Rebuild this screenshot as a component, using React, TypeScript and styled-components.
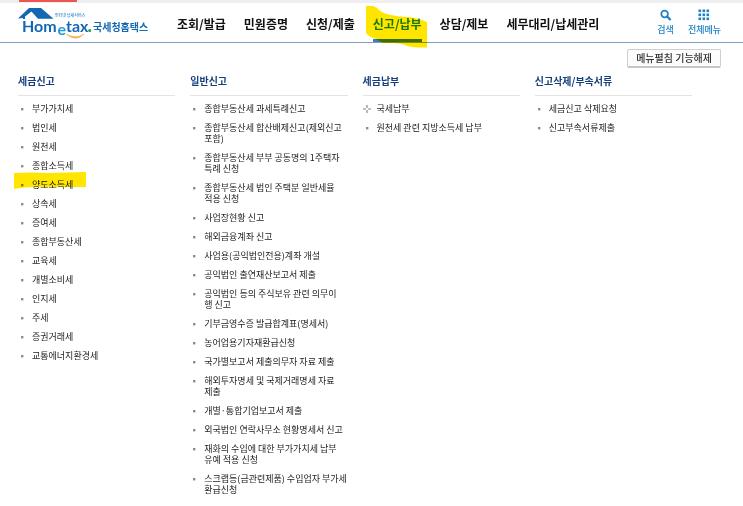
import React from "react";
import styled, { createGlobalStyle } from "styled-components";

const GlobalStyle = createGlobalStyle`
  *, *::before, *::after { box-sizing: border-box; }
  body {
    margin: 0;
    background: #fff;
    color: #222;
    font-family: "Noto Sans CJK KR", "Noto Sans", sans-serif;
    font-size: 9px;
    line-height: 11px;
  }
  a { color: inherit; text-decoration: none; }
  ul { list-style: none; margin: 0; padding: 0; }
`;

const TopStrip = styled.div`
  height: 3px;
  padding-left: 19px;
  background: #efefef;
`;

const TabMark = styled.div`
  width: 58px;
  height: 2px;
  background: #ef5552;
`;

const Header = styled.header`
  display: flex;
  align-items: stretch;
  height: 40px;
  padding: 0 22px 0 18px;
  border-bottom: 1px solid #7f9dc0;
`;

const Logo = styled.a`
  display: flex;
  flex: none;
  width: 159px;
`;

const LogoArt = styled.svg`
  display: block;
  width: 132px;
  height: 37px;
`;

const Nav = styled.nav`
  display: flex;
  gap: 18px;
`;

const NavLink = styled.a<{ $active?: boolean }>`
  position: relative;
  display: flex;
  align-items: center;
  padding-top: 5px;
  border-bottom: 3px solid ${(p) => (p.$active ? "#3d7cc4" : "transparent")};
  color: ${(p) => (p.$active ? "#1a86bd" : "#111")};
  font-size: 12px;
  line-height: 16px;
  font-weight: 700;
  white-space: nowrap;
`;

const NavMarker = styled.svg`
  position: absolute;
  left: -8px;
  top: 3px;
  width: 62px;
  height: 42px;
  mix-blend-mode: multiply;
  pointer-events: none;
`;

const Tools = styled.div`
  display: flex;
  gap: 14px;
  margin-left: auto;
`;

const Tool = styled.button`
  display: flex;
  flex-direction: column;
  align-items: center;
  gap: 2px;
  padding: 6px 0 0;
  border: 0;
  background: none;
  color: #1f82c4;
  font: 500 9px/14px "Noto Sans CJK KR", sans-serif;
  white-space: nowrap;
  cursor: pointer;
`;

const ToolIcon = styled.svg`
  display: block;
  width: 12px;
  height: 12px;
`;

const PanelBar = styled.div`
  display: flex;
  justify-content: flex-end;
  padding: 6px 22px 0;
`;

const FoldButton = styled.button`
  height: 19px;
  padding: 0 8px;
  border: 1px solid #cfcfcf;
  border-bottom: 2px solid #c6c6c6;
  border-radius: 2px;
  background: #fcfcfc;
  color: #333;
  font: 500 10px/14px "Noto Sans CJK KR", sans-serif;
  cursor: pointer;
`;

const Menu = styled.main`
  display: grid;
  grid-template-columns: repeat(4, 1fr);
  gap: 15px;
  padding: 6px 51px 8px 18px;
`;

const Title = styled.h2`
  margin: 0;
  padding-bottom: 7px;
  border-bottom: 1px solid #e4e4e4;
  color: #16407c;
  font-size: 10px;
  line-height: 14px;
  font-weight: 700;
`;

const List = styled.ul`
  display: flex;
  flex-direction: column;
  gap: 8px;
  padding-top: 7px;
`;

const Item = styled.li`
  position: relative;
  display: flex;
`;

const Bullet = styled.svg`
  flex: none;
  width: 9px;
  height: 11px;
  margin-right: 5px;
`;

const ItemLink = styled.a`
  white-space: pre-line;
`;

const ItemMarker = styled.svg`
  position: absolute;
  left: -4px;
  top: -7px;
  width: 72px;
  height: 17px;
  mix-blend-mode: multiply;
  pointer-events: none;
`;

type Entry = { text: string; expandable?: boolean; marked?: boolean };

const items = (...texts: string[]): Entry[] => texts.map((text) => ({ text }));

const nav = ["조회/발급", "민원증명", "신청/제출", "신고/납부", "상담/제보", "세무대리/납세관리"];

const groups: { title: string; entries: Entry[] }[] = [
  {
    title: "세금신고",
    entries: [
      ...items("부가가치세", "법인세", "원천세", "종합소득세"),
      { text: "양도소득세", marked: true },
      ...items(
        "상속세",
        "증여세",
        "종합부동산세",
        "교육세",
        "개별소비세",
        "인지세",
        "주세",
        "증권거래세",
        "교통에너지환경세"
      ),
    ],
  },
  {
    title: "일반신고",
    entries: items(
      "종합부동산세 과세특례신고",
      "종합부동산세 합산배제신고(제외신고\n포함)",
      "종합부동산세 부부 공동명의 1주택자\n특례 신청",
      "종합부동산세 법인 주택분 일반세율\n적용 신청",
      "사업장현황 신고",
      "해외금융계좌 신고",
      "사업용(공익법인전용)계좌 개설",
      "공익법인 출연재산보고서 제출",
      "공익법인 등의 주식보유 관련 의무이\n행 신고",
      "기부금영수증 발급합계표(명세서)",
      "농어업용기자재환급신청",
      "국가별보고서 제출의무자 자료 제출",
      "해외투자명세 및 국제거래명세 자료\n제출",
      "개별·통합기업보고서 제출",
      "외국법인 연락사무소 현황명세서 신고",
      "재화의 수입에 대한 부가가치세 납부\n유예 적용 신청",
      "스크랩등(금관련제품) 수입업자 부가세\n환급신청"
    ),
  },
  {
    title: "세금납부",
    entries: [{ text: "국세납부", expandable: true }, ...items("원천세 관련 지방소득세 납부")],
  },
  {
    title: "신고삭제/부속서류",
    entries: items("세금신고 삭제요청", "신고부속서류제출"),
  },
];

const HometaxLogo = () => (
  <LogoArt viewBox="0 0 132 37" role="img" aria-label="Hometax 국세청홈택스">
    <path d="M0 15.5 L11 5 H23 L35.5 15.7 H20 L13.5 8.5 L7 13.5 V16 H5 V15 Z" fill="#1268b3" />
    <text x="37" y="14" fontSize="4" fontWeight="500" fill="#2f86c4">
      인터넷 납세서비스
    </text>
    <g fontFamily="Lato, Noto Sans, sans-serif" fontWeight="700" fill="#1268b3">
      <text x="4" y="28.5" fontSize="16">Hom</text>
      <text x="39.5" y="32" fontSize="16" fill="#1c9be0">e</text>
      <text x="48" y="28.5" fontSize="16">tax</text>
    </g>
    <circle cx="71.7" cy="27.5" r="1.5" fill="#19a14a" />
    <path d="M48 31 Q58 39.5 66 31 Q58 36.5 48 31 Z" fill="#f5b04c" stroke="#f5b04c" strokeWidth="0.5" />
    <text x="75" y="27.5" fontSize="10" fontWeight="700" fill="#1268b3">
      국세청홈택스
    </text>
  </LogoArt>
);

const dots = [0, 4, 8];

export default function App() {
  return (
    <>
      <GlobalStyle />
      <TopStrip>
        <TabMark />
      </TopStrip>
      <Header>
        <Logo href="#">
          <HometaxLogo />
        </Logo>
        <Nav>
          {nav.map((label) => {
            const active = label === "신고/납부";
            return (
              <NavLink key={label} href="#" $active={active}>
                {label}
                {active && (
                  <NavMarker viewBox="0 0 62 42" aria-hidden="true">
                    <path
                      d="M1 0 H8 Q12 1 14 4 Q19 8 26 9 Q34 11 43 11 Q51 12 57 14 L62 16 V41.5 H53 Q45 41 40 39 Q34 37 28 37 H18 Q13 34 11 33 Q4 31 1 27 Z"
                      fill="#ffe500"
                    />
                  </NavMarker>
                )}
              </NavLink>
            );
          })}
        </Nav>
        <Tools>
          <Tool type="button">
            <ToolIcon viewBox="0 0 12 12" fill="none" stroke="currentColor" aria-hidden="true">
              <circle cx="4.6" cy="5" r="3.3" strokeWidth="1.8" />
              <path d="M7 7.4 L10.6 11" strokeWidth="2.2" />
            </ToolIcon>
            검색
          </Tool>
          <Tool type="button">
            <ToolIcon viewBox="0 0 12 12" fill="currentColor" aria-hidden="true">
              {dots.map((y) => dots.map((x) => <rect key={`${x}-${y}`} x={x + 0.5} y={y + 0.5} width="2.6" height="2.6" />))}
            </ToolIcon>
            전체메뉴
          </Tool>
        </Tools>
      </Header>
      <PanelBar>
        <FoldButton type="button">메뉴펼침 기능해제</FoldButton>
      </PanelBar>
      <Menu>
        {groups.map((group) => (
          <section key={group.title}>
            <Title>{group.title}</Title>
            <List>
              {group.entries.map((entry) => (
                <Item key={entry.text}>
                  <Bullet viewBox="0 0 9 11" aria-hidden="true">
                    {entry.expandable ? (
                      <path d="M4 2 V5 M4 7 V10 M0 6 H3 M5 6 H8" stroke="#888" strokeWidth="1.2" />
                    ) : (
                      <rect x="3" y="5" width="2.4" height="2.4" fill="#8c8c8c" />
                    )}
                  </Bullet>
                  <ItemLink href="#">{entry.text}</ItemLink>
                  {entry.marked && (
                    <ItemMarker viewBox="0 0 72 17" aria-hidden="true">
                      <path d="M0 1 Q18 0 34 1 L72 0 V15 H22 Q8 15 0 17 Z" fill="#ffe500" />
                    </ItemMarker>
                  )}
                </Item>
              ))}
            </List>
          </section>
        ))}
      </Menu>
    </>
  );
}
